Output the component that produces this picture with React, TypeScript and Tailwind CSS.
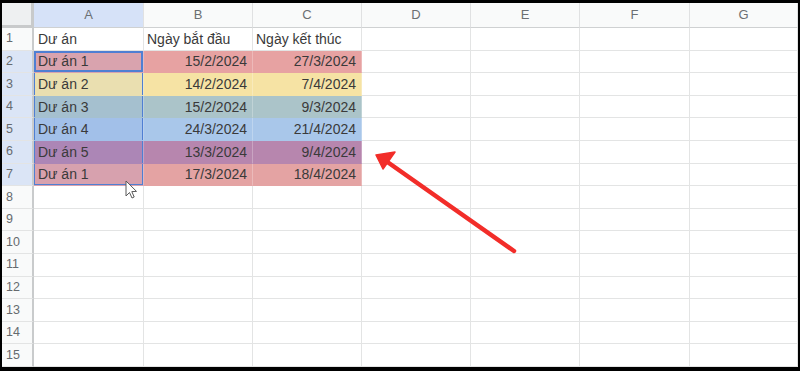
import React from "react"

const COLS = ["A", "B", "C", "D", "E", "F", "G"]

type Row = { name: string; start: string; end: string; fill: string; fillA: string }

const DATA: Row[] = [
  { name: "Dư án 1", start: "15/2/2024", end: "27/3/2024", fill: "bg-[#e7a2a2]", fillA: "bg-[#d9a3ae]" },
  { name: "Dư án 2", start: "14/2/2024", end: "7/4/2024", fill: "bg-[#f6e3a4]", fillA: "bg-[#eadfb0]" },
  { name: "Dư án 3", start: "15/2/2024", end: "9/3/2024", fill: "bg-[#abc4c9]", fillA: "bg-[#a5c0cf]" },
  { name: "Dư án 4", start: "24/3/2024", end: "21/4/2024", fill: "bg-[#a9c7ea]", fillA: "bg-[#a2c0e9]" },
  { name: "Dư án 5", start: "13/3/2024", end: "9/4/2024", fill: "bg-[#b786ae]", fillA: "bg-[#ac86b6]" },
  { name: "Dư án 1", start: "17/3/2024", end: "18/4/2024", fill: "bg-[#e4a3a3]", fillA: "bg-[#d7a1ae]" },
]

const base = "flex items-center text-[14px] leading-4 text-[#3a3a3a] overflow-hidden whitespace-nowrap"
const cell = `${base} border-r border-b border-[#e3e4e4]`
// coloured cells hide the grid lines, the fill shows through the border
const colored = `${base} border-r border-b border-b-transparent border-r-white/25`

function RowHead({ n, active }: { n: number; active?: boolean }) {
  return (
    <div
      className={`flex items-center pl-[4px] text-[12.5px] text-[#666a6e] border-b border-r-2 border-b-[#e3e4e4] border-r-[#c9cbcc] ${
        active ? "bg-[#dbe5f6]" : "bg-[#f9fafa]"
      }`}
    >
      {n}
    </div>
  )
}

function Empty({ n }: { n: number }) {
  return (
    <>
      {Array.from({ length: n }).map((_, i) => (
        <div key={i} className={`${cell} bg-white`} />
      ))}
    </>
  )
}

export default function App() {
  return (
    <div className="w-[800px] h-[371px] bg-black pt-[3px] pl-[2px] pr-[2px] pb-[4px] overflow-hidden" style={{ fontFamily: '"Liberation Sans", Arial, sans-serif' }}>
      <div className="relative w-full h-full bg-white">
        <div className="grid grid-cols-[32px_110px_109px_109px_109px_109px_110px_1fr] grid-rows-[25px_repeat(15,22.6px)] h-full">
          {/* column headers */}
          <div className="bg-[#eef0f1] border-r-[3px] border-b-[3px] border-[#c8cacb]" />
          {COLS.map((c) => (
            <div
              key={c}
              className={`flex items-center justify-center text-[13px] text-[#6b6f73] border-r border-b border-r-[#e0e1e2] border-b-[#cfd1d2] ${
                c === "A" ? "bg-[#d6e2f8]" : "bg-[#f9fafa]"
              }`}
            >
              {c}
            </div>
          ))}

          {/* row 1 */}
          <RowHead n={1} />
          <div className={`${cell} pl-[4px]`}>Dư án</div>
          <div className={`${cell} pl-[3px]`}>Ngày bắt đầu</div>
          <div className={`${cell} pl-[3px]`}>Ngày kết thúc</div>
          <Empty n={4} />

          {/* data rows */}
          {DATA.map((r, i) => {
            const first = i === 0
            const last = i === DATA.length - 1
            const sel = first
              ? "shadow-[inset_0_0_0_2px_#4f7fd3]"
              : last
              ? "shadow-[inset_1px_0_0_#4f7fd3,inset_-1px_0_0_#4f7fd3,inset_0_-1px_0_#4f7fd3]"
              : "shadow-[inset_1px_0_0_#4f7fd3,inset_-1px_0_0_#4f7fd3]"
            return (
              <React.Fragment key={i}>
                <RowHead n={i + 2} active />
                <div className={`${colored} pl-[4px] ${r.fillA} ${sel}`}>{r.name}</div>
                <div className={`${colored} justify-end pr-[5px] ${r.fill}`}>{r.start}</div>
                <div className={`${colored} justify-end pr-[5px] ${r.fill} border-r-[#e3e4e4]`}>{r.end}</div>
                <Empty n={4} />
              </React.Fragment>
            )
          })}

          {/* empty rows */}
          {Array.from({ length: 8 }).map((_, i) => (
            <React.Fragment key={i}>
              <RowHead n={i + 8} />
              <Empty n={7} />
            </React.Fragment>
          ))}
        </div>

        {/* annotation arrow + mouse pointer */}
        <svg className="absolute left-[-2px] top-[-3px] pointer-events-none" width="800" height="371" viewBox="0 0 800 371">
          <line x1="514" y1="251" x2="386" y2="161" stroke="#f22d29" strokeWidth="4.5" strokeLinecap="round" />
          <polygon points="376,155 395,152 383,169" fill="#f22d29" stroke="#f22d29" strokeWidth="1.5" strokeLinejoin="round" />
          <path
            d="M126 181 L126 196 L129.5 192.5 L132 198 L134.2 197 L131.8 191.6 L136.5 191.4 Z"
            fill="#ffffff"
            stroke="#5a5a5a"
            strokeWidth="1"
            strokeLinejoin="round"
          />
        </svg>
      </div>
    </div>
  )
}
